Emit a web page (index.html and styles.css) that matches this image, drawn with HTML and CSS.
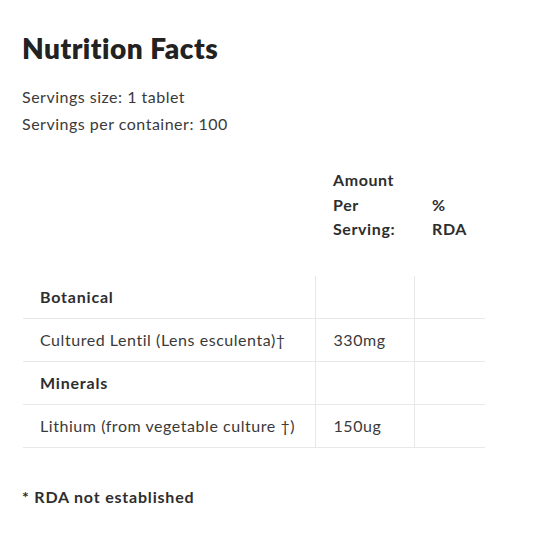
FILE: index.html
```html
<!DOCTYPE html>
<html>
<head>
<meta charset="utf-8">
<link rel="stylesheet" href="styles.css">
</head>
<body>
<main class="facts">
  <h1 class="title">Nutrition Facts</h1>
  <p class="serving">Servings size: 1 tablet</p>
  <p class="serving">Servings per container: 100</p>
  <table class="nut-table">
    <colgroup>
      <col class="c1"><col class="c2"><col class="c3">
    </colgroup>
    <thead>
      <tr>
        <th></th>
        <th class="head">Amount<br>Per<br>Serving:</th>
        <th class="head">%<br>RDA</th>
      </tr>
    </thead>
    <tbody>
      <tr><td class="group">Botanical</td><td></td><td></td></tr>
      <tr><td>Cultured Lentil (Lens esculenta)†</td><td>330mg</td><td></td></tr>
      <tr><td class="group">Minerals</td><td></td><td></td></tr>
      <tr><td>Lithium (from vegetable culture †)</td><td>150ug</td><td></td></tr>
    </tbody>
  </table>
  <p class="note">* RDA not established</p>
</main>
</body>
</html>
```
FILE: styles.css
```css
html, body {
  margin: 0;
  padding: 0;
  background: #ffffff;
}
body {
  font-family: "Lato", "Noto Sans", sans-serif;
  color: #3a3a3a;
  font-variant-ligatures: none;
}
.facts {
  padding: 32px 22px 0 22px;
}
.title {
  margin: 0;
  font-size: 28px;
  line-height: 32px;
  font-weight: 800;
  letter-spacing: 0.5px;
  color: #222222;
}
.serving {
  margin: 0;
  font-size: 16px;
  line-height: 27px;
  letter-spacing: 0.5px;
}
.title + .serving {
  margin-top: 19px;
}
.nut-table {
  margin-top: 19px;
  margin-left: 1px;
  width: 462px;
  border-collapse: collapse;
  table-layout: fixed;
  font-size: 16px;
  letter-spacing: 0.55px;
}
.c1 { width: 292px; }
.c2 { width: 99px; }
.c3 { width: 71px; }
.head {
  text-align: left;
  vertical-align: bottom;
  font-weight: 700;
  line-height: 24.5px;
  letter-spacing: 0.6px;
  padding: 12px 10px 34px 18px;
  color: #2e2e2e;
}
.nut-table td {
  padding: 11px 10px 11px 17px;
  line-height: 20px;
  border-bottom: 1px solid #e8e8e8;
  white-space: nowrap;
}
.nut-table td + td {
  border-left: 1px solid #e8e8e8;
  padding-left: 18px;
}
.nut-table td.group {
  font-weight: 700;
  letter-spacing: 0.8px;
  color: #2e2e2e;
}
.note {
  margin: 39px 0 0 0;
  font-size: 16px;
  line-height: 20px;
  font-weight: 700;
  letter-spacing: 0.8px;
  color: #2e2e2e;
}
```
